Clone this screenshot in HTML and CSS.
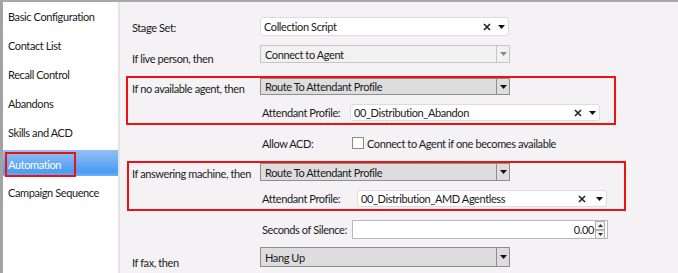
FILE: index.html
```html
<!DOCTYPE html>
<html lang="en">
<head>
    <meta charset="UTF-8">
    <link rel="stylesheet" href="styles.css">
</head>
<body>
    <div class="window">
        <!-- side menu -->
        <ul class="nav">
            <li>Basic Configuration</li>
            <li>Contact List</li>
            <li>Recall Control</li>
            <li>Abandons</li>
            <li>Skills and ACD</li>
            <li class="selected"><span class="mark">Automation</span></li>
            <li>Campaign Sequence</li>
        </ul>

        <!-- automation form -->
        <main class="form">
            <div class="row row-stage">
                <label class="lbl">Stage Set:</label>
                <div class="combo">
                    <span class="val">Collection Script</span>
                    <svg class="clear" width="8" height="8" viewBox="0 0 8 8"><path d="M1 1L7 7M7 1L1 7" stroke="#222" stroke-width="1.6"/></svg>
                    <svg class="arrow" width="7" height="4" viewBox="0 0 7 4"><path d="M0 0H7L3.5 4Z" fill="#111"/></svg>
                </div>
            </div>

            <div class="row row-live">
                <label class="lbl">If live person, then</label>
                <div class="drop disabled">
                    <span class="val">Connect to Agent</span>
                    <span class="btn"><svg width="7" height="4" viewBox="0 0 7 4"><path d="M0 0H7L3.5 4Z" fill="#8a8a8a"/></svg></span>
                </div>
            </div>

            <div class="group group-agent">
                <label class="lbl">If no available agent, then</label>
                <div class="stack">
                    <div class="drop">
                        <span class="val">Route To Attendant Profile</span>
                        <span class="btn"><svg width="7" height="4" viewBox="0 0 7 4"><path d="M0 0H7L3.5 4Z" fill="#111"/></svg></span>
                    </div>
                    <div class="sub">
                        <label class="sub-lbl">Attendant Profile:</label>
                        <div class="combo profile-a">
                            <span class="val">00_Distribution_Abandon</span>
                            <svg class="clear" width="8" height="8" viewBox="0 0 8 8"><path d="M1 1L7 7M7 1L1 7" stroke="#222" stroke-width="1.6"/></svg>
                            <svg class="arrow" width="7" height="4" viewBox="0 0 7 4"><path d="M0 0H7L3.5 4Z" fill="#111"/></svg>
                        </div>
                    </div>
                </div>
            </div>

            <div class="row row-acd">
                <label class="lbl"></label>
                <label class="sub-lbl">Allow ACD:</label>
                <span class="check"></span>
                <span class="check-text">Connect to Agent if one becomes available</span>
            </div>

            <div class="group group-machine">
                <label class="lbl">If answering machine, then</label>
                <div class="stack">
                    <div class="drop tall">
                        <span class="val">Route To Attendant Profile</span>
                        <span class="btn"><svg width="7" height="4" viewBox="0 0 7 4"><path d="M0 0H7L3.5 4Z" fill="#111"/></svg></span>
                    </div>
                    <div class="sub">
                        <label class="sub-lbl">Attendant Profile:</label>
                        <div class="combo profile-b">
                            <span class="val">00_Distribution_AMD Agentless</span>
                            <svg class="clear" width="8" height="8" viewBox="0 0 8 8"><path d="M1 1L7 7M7 1L1 7" stroke="#222" stroke-width="1.6"/></svg>
                            <svg class="arrow" width="7" height="4" viewBox="0 0 7 4"><path d="M0 0H7L3.5 4Z" fill="#111"/></svg>
                        </div>
                    </div>
                </div>
            </div>

            <div class="row row-silence">
                <label class="lbl"></label>
                <label class="sub-lbl">Seconds of Silence:</label>
                <div class="number">
                    <span class="num-val">0.00</span>
                    <span class="spin">
                        <span class="spin-btn"><svg width="5" height="3" viewBox="0 0 5 3"><path d="M0 3H5L2.5 0Z" fill="#333"/></svg></span>
                        <span class="spin-btn"><svg width="5" height="3" viewBox="0 0 5 3"><path d="M0 0H5L2.5 3Z" fill="#333"/></svg></span>
                    </span>
                </div>
            </div>

            <div class="row row-fax">
                <label class="lbl">If fax, then</label>
                <div class="drop fax">
                    <span class="val">Hang Up</span>
                    <span class="btn"><svg width="7" height="4" viewBox="0 0 7 4"><path d="M0 0H7L3.5 4Z" fill="#111"/></svg></span>
                </div>
            </div>
        </main>
    </div>
</body>
</html>
```

FILE: styles.css
```css
/* base */
body {
    margin: 0;
    font-family: Lato, "Liberation Sans", sans-serif;
    font-size: 11px;
    letter-spacing: -0.4px;
    color: #1a1a1a;
    background-color: #ffffff;
}

.window {
    display: flex;
    width: 675px;
    height: 271px;
    border-left: 3px solid #a3a3a3;
    border-top: 2px solid #a8a8a8;
    overflow: hidden;
}

/* side menu */
.nav {
    list-style: none;
    margin: 0;
    padding: 2px 0 0 0;
    width: 115px;
    flex-shrink: 0;
    background-color: #ffffff;
    border-right: 2px solid #e4e4e4;
}

.nav li {
    height: 25px;
    line-height: 25px;
    margin-bottom: 4px;
    padding-left: 5px;
    white-space: nowrap;
}

.nav li.selected {
    height: 26px;
    margin-top: 5px;
    background: linear-gradient(#93c0f2, #4b9cf3 85%, #6fb0f5);
    color: #ffffff;
}

.nav li.selected + li {
    margin-top: 0;
}

/* red annotation boxes */
.mark {
    display: inline-block;
    box-sizing: border-box;
    width: 71px;
    height: 25px;
    line-height: 22px;
    margin-top: 2px;
    margin-left: -3px;
    padding-left: 1px;
    border: 2px solid #ee1111;
}

/* form */
.form {
    flex: 1;
    background-color: #f5f2f5;
    padding-top: 15px;
    padding-left: 6px;
}

.row {
    display: flex;
    align-items: center;
    padding-left: 6px;
}

.lbl {
    width: 128px;
    flex-shrink: 0;
    white-space: nowrap;
}

.row-stage { height: 19px; margin-bottom: 9px; }
.row-live { height: 18px; margin-bottom: 13px; }
.row-stage .lbl { padding-top: 2px; }
.row-live .lbl { padding-top: 8px; }

.group {
    display: flex;
    box-sizing: border-box;
    border: 2px solid #ee1111;
    padding-left: 4px;
    padding-bottom: 2px;
}

.group .lbl {
    padding-top: 4px;
}

.group-agent { width: 490px; }
.group-machine { width: 499px; margin-left: 1px; padding-left: 3px; }

.stack {
    display: flex;
    flex-direction: column;
}

.sub {
    display: flex;
    align-items: center;
    margin-top: 9px;
}

.sub-lbl {
    width: 88px;
    padding-left: 2px;
    flex-shrink: 0;
    white-space: nowrap;
}

/* combo boxes */
.combo {
    display: flex;
    align-items: center;
    box-sizing: border-box;
    width: 249px;
    height: 19px;
    background-color: #ffffff;
    border: 1px solid #dcdcdc;
    border-radius: 3px;
    padding-left: 3px;
}

.combo .val {
    flex: 1;
    white-space: nowrap;
}

.combo .clear {
    margin-right: 7px;
}

.combo .arrow {
    margin-right: 3px;
}

.profile-a { width: 250px; height: 17px; }
.profile-b { width: 250px; height: 17px; margin-left: 7px; padding-left: 3px; }
.profile-b .clear { margin-right: 10px; }

.drop {
    display: flex;
    align-items: center;
    box-sizing: border-box;
    width: 250px;
    height: 17px;
    background-color: #dddddd;
    border: 1px solid #8e8e8e;
}

.drop .val {
    flex: 1;
    padding-left: 4px;
    white-space: nowrap;
}

.drop .btn {
    display: flex;
    align-items: center;
    justify-content: center;
    width: 12px;
    height: 100%;
    border-left: 1px solid #8e8e8e;
}

.drop.tall { height: 18px; }
.drop.fax { height: 20px; }

.drop.disabled {
    height: 18px;
    background-color: #f2f1f2;
    border-color: #c6c6c6;
}

.drop.disabled .btn {
    border-left-color: #c6c6c6;
}

/* allow acd */
.row-acd {
    height: 24px;
    margin: 6px 0;
}

.check {
    box-sizing: border-box;
    width: 12px;
    height: 12px;
    margin-left: 2px;
    margin-right: 3px;
    background-color: #ffffff;
    border: 1px solid #8a8a8a;
}

/* seconds of silence */
.row-silence {
    height: 19px;
    margin-top: 9px;
}

.row-silence .sub-lbl { width: 90px; }

.number {
    display: flex;
    align-items: center;
    box-sizing: border-box;
    width: 256px;
    height: 19px;
    background-color: #ffffff;
    border: 1px solid #b8b8b8;
}

.num-val {
    flex: 1;
    text-align: right;
    padding-right: 1px;
}

.spin {
    display: flex;
    flex-direction: column;
    width: 10px;
    margin-right: 2px;
}

.spin-btn {
    display: flex;
    align-items: center;
    justify-content: center;
    height: 7px;
    border: 1px solid #b0b0b0;
    background-color: #f4f4f4;
}

.row-fax {
    height: 20px;
    margin-top: 8px;
}

.row-fax .lbl { padding-top: 10px; }
```
